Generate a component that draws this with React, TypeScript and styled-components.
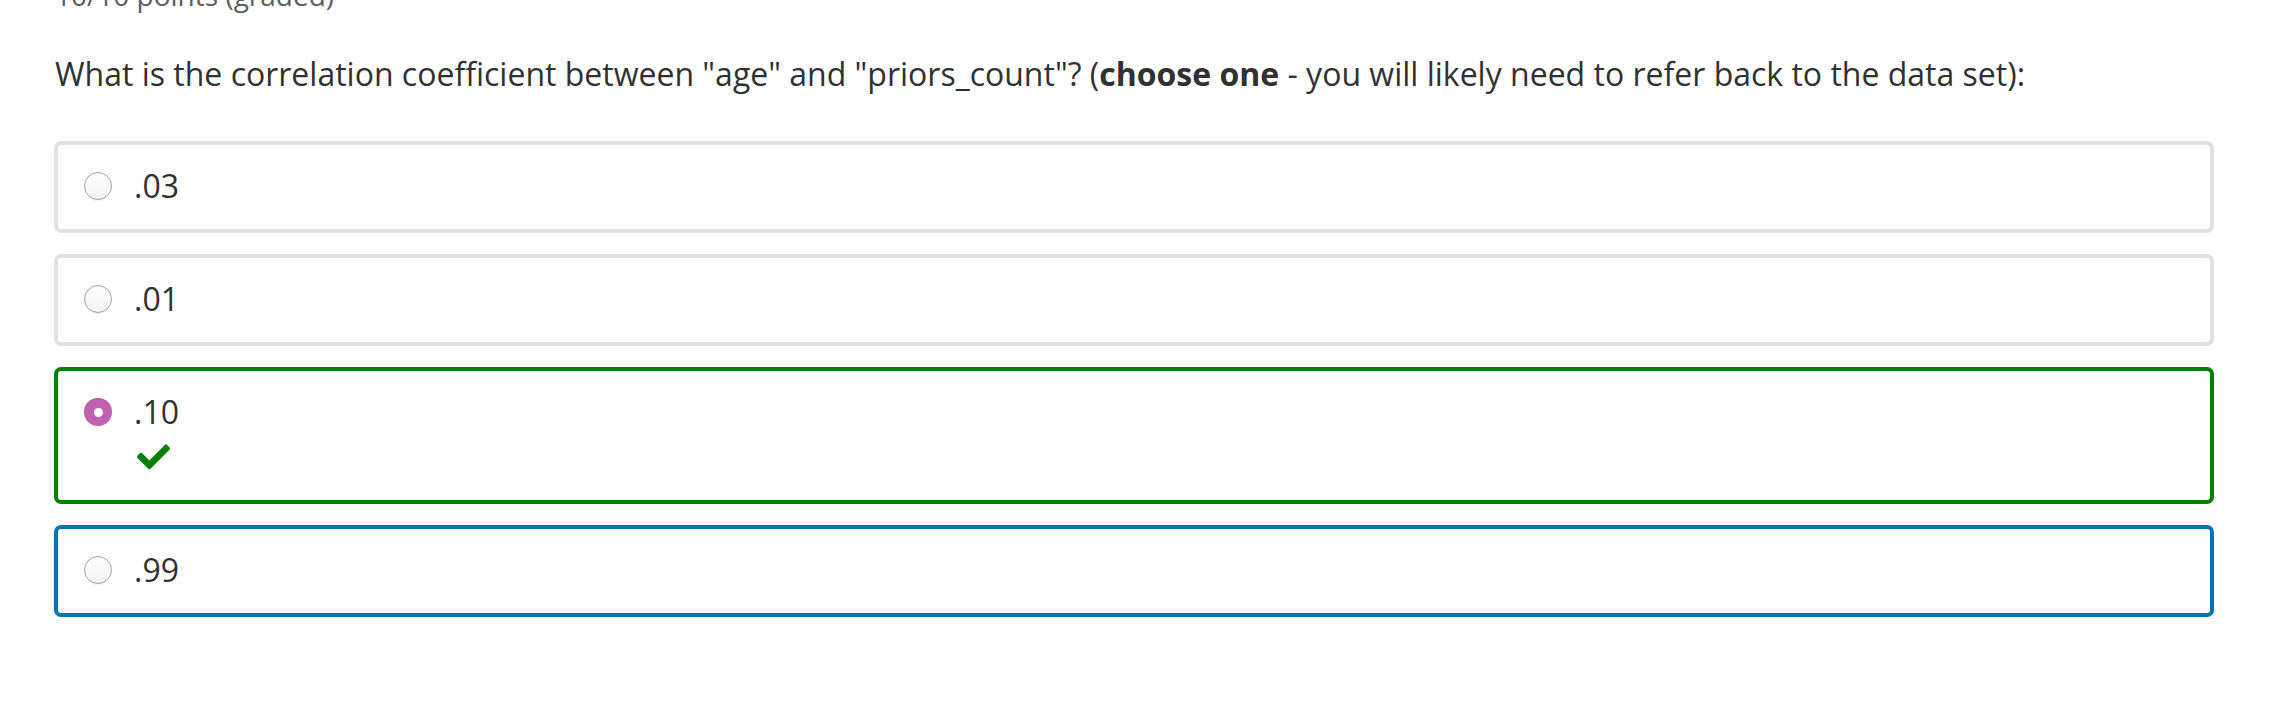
import React from "react";
import styled, { createGlobalStyle } from "styled-components";

const GlobalStyle = createGlobalStyle`
  html, body {
    margin: 0;
    padding: 0;
    background: #ffffff;
    overflow: hidden;
  }
  body {
    font-family: "Open Sans", "Noto Sans", "Liberation Sans", sans-serif;
    color: #313131;
  }
`;

const Page = styled.div`
  width: 2160px;
  padding: 0 56px 0 54px;
`;

const Meta = styled.div`
  margin-top: -24px;
  font-size: 28px;
  line-height: 39px;
  color: #5e5e5e;
  padding-left: 1px;
`;

const Question = styled.p`
  margin: 37px 0 46px;
  font-size: 32px;
  line-height: 43px;
  color: #313131;
  padding-left: 1px;

  strong {
    font-weight: 700;
  }
`;

const OptionList = styled.div`
  display: flex;
  flex-direction: column;
  gap: 21px;
`;

type Status = "idle" | "correct" | "focus";

const borderColors: Record<Status, string> = {
  idle: "#e1e1e1",
  correct: "#008100",
  focus: "#0075b4",
};

const OptionBox = styled.label<{ $status: Status }>`
  display: block;
  box-sizing: border-box;
  border: 4px solid ${(p) => borderColors[p.$status]};
  border-radius: 7px;
  padding: 20px 27px 22px 26px;
  background: #fff;
`;

const OptionRow = styled.div`
  display: flex;
  align-items: center;
  height: 42px;
`;

const Radio = styled.span<{ $checked?: boolean }>`
  position: relative;
  flex: none;
  box-sizing: border-box;
  width: 28px;
  height: 28px;
  border-radius: 50%;
  border: ${(p) => (p.$checked ? "none" : "1.5px solid #a4a4a4")};
  background: ${(p) =>
    p.$checked
      ? "#c062b0"
      : "linear-gradient(180deg, #ffffff 0%, #f3f3f3 100%)"};
  box-shadow: ${(p) =>
    p.$checked
      ? "inset 0 1px 1px rgba(0,0,0,0.12)"
      : "inset 0 1px 1px rgba(0,0,0,0.06), 0 1px 0 rgba(0,0,0,0.06)"};

  &::after {
    content: "";
    display: ${(p) => (p.$checked ? "block" : "none")};
    position: absolute;
    left: 50%;
    top: 50%;
    width: 9px;
    height: 9px;
    margin: -4.5px 0 0 -4.5px;
    border-radius: 50%;
    background: #ffffff;
  }
`;

const OptionText = styled.span`
  margin-left: 22px;
  font-size: 32px;
  line-height: 42px;
  color: #313131;
`;

const Feedback = styled.div`
  height: 34px;
  margin-top: 11px;
  padding-left: 53px;
  display: flex;
  align-items: flex-start;
`;

const CheckIcon = () => (
  <svg width="33" height="26" viewBox="0 62 512 392" aria-hidden="true">
    <path
      fill="#008100"
      d="M173.898 439.404l-166.4-166.4c-9.997-9.997-9.997-26.206 0-36.204l36.203-36.204c9.997-9.998 26.207-9.998 36.204 0L192 312.69 432.095 72.596c9.997-9.997 26.207-9.997 36.204 0l36.203 36.204c9.997 9.997 9.997 26.206 0 36.204l-294.4 294.401c-9.998 9.997-26.207 9.997-36.204-.001z"
    />
  </svg>
);

const options: { label: string; status: Status; checked?: boolean }[] = [
  { label: ".03", status: "idle" },
  { label: ".01", status: "idle" },
  { label: ".10", status: "correct", checked: true },
  { label: ".99", status: "focus" },
];

export default function App() {
  return (
    <>
      <GlobalStyle />
      <Page>
        <Meta>10/10 points (graded)</Meta>
        <Question>
          What is the correlation coefficient between "age" and "priors_count"? (
          <strong>choose one</strong> - you will likely need to refer back to the data set):
        </Question>
        <OptionList>
          {options.map((o) => (
            <OptionBox key={o.label} $status={o.status}>
              <OptionRow>
                <Radio $checked={o.checked} />
                <OptionText>{o.label}</OptionText>
              </OptionRow>
              {o.status === "correct" && (
                <Feedback>
                  <CheckIcon />
                </Feedback>
              )}
            </OptionBox>
          ))}
        </OptionList>
      </Page>
    </>
  );
}
